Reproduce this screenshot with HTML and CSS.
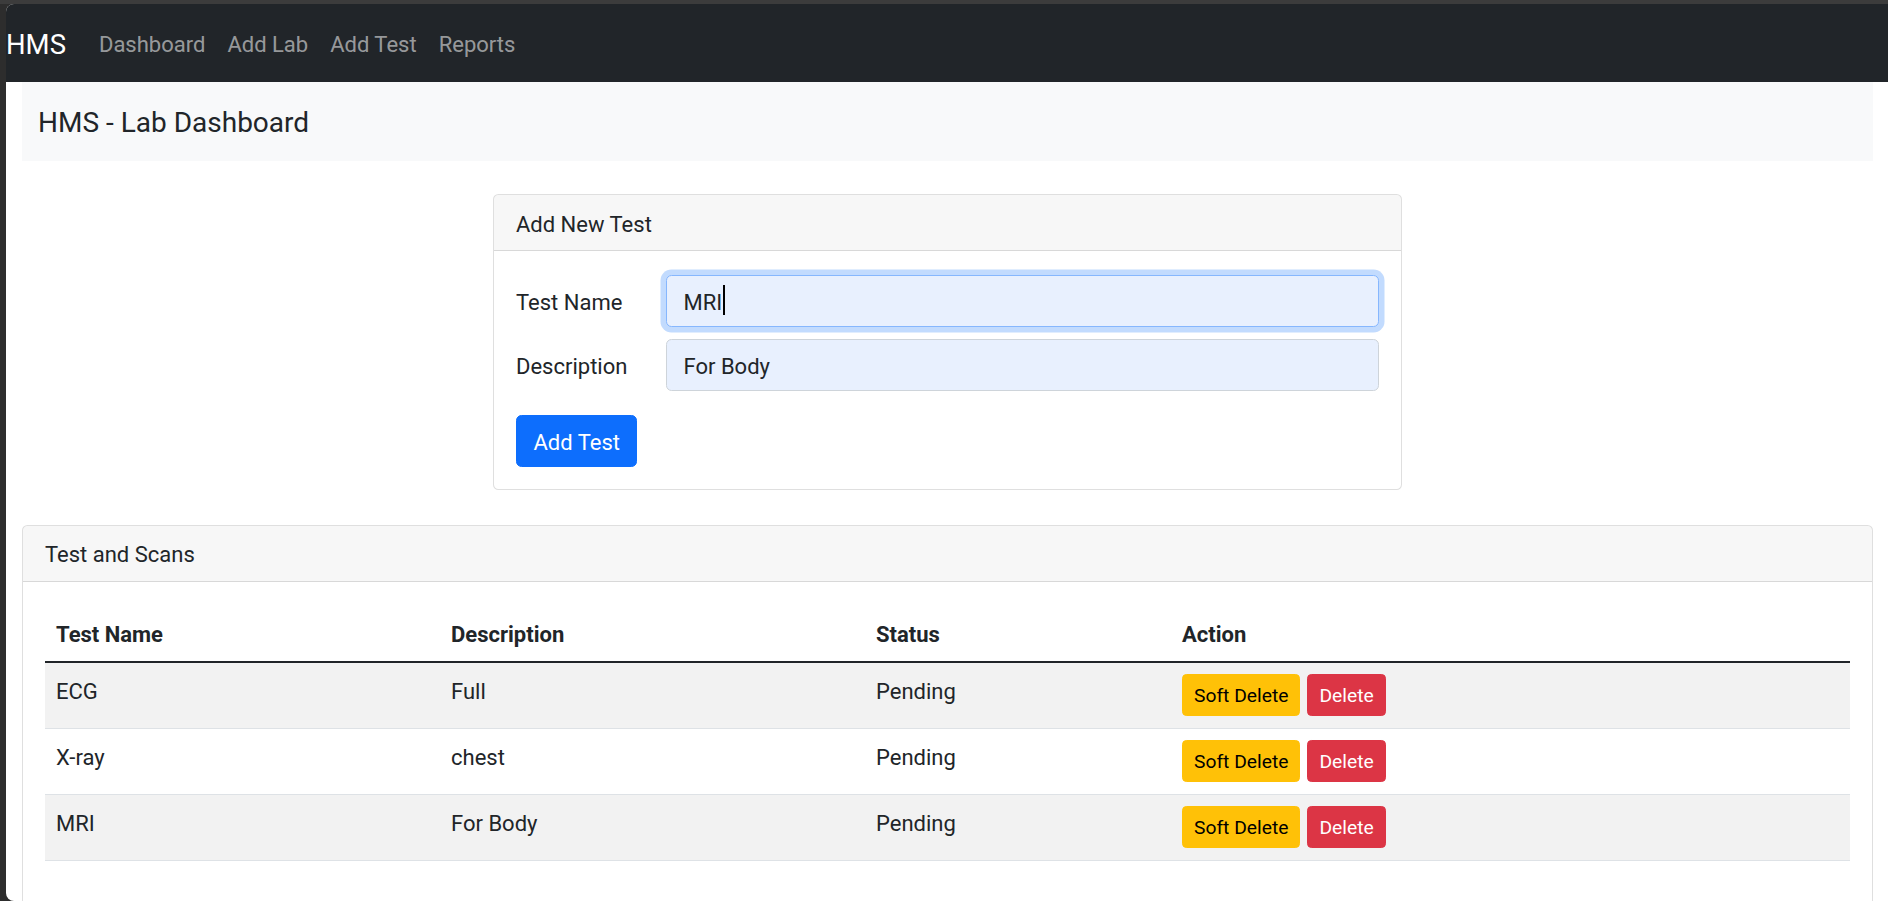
FILE: index.html
```html
<!DOCTYPE html>
<html lang="en">
<head>
<meta charset="utf-8">
<title>HMS - Lab Dashboard</title>
<link rel="stylesheet" href="styles.css">
</head>
<body>
<div class="window">
  <nav class="navbar">
    <a class="brand" href="#">HMS</a>
    <ul class="nav">
      <li><a class="nav-link" href="#">Dashboard</a></li>
      <li><a class="nav-link" href="#">Add Lab</a></li>
      <li><a class="nav-link" href="#">Add Test</a></li>
      <li><a class="nav-link" href="#">Reports</a></li>
    </ul>
  </nav>
  <main class="container">
    <div class="page-title"><h5>HMS - Lab Dashboard</h5></div>

    <section class="card card-form">
      <div class="card-header">Add New Test</div>
      <div class="card-body form-body">
        <form>
          <div class="form-row">
            <label for="tname">Test Name</label>
            <div class="input-wrap">
              <input id="tname" class="form-control autofilled focused" type="text" value="MRI">
              <span class="caret"></span>
            </div>
          </div>
          <div class="form-row">
            <label for="tdesc">Description</label>
            <div class="input-wrap">
              <input id="tdesc" class="form-control autofilled" type="text" value="For Body">
            </div>
          </div>
          <button type="button" class="btn btn-primary btn-submit">Add Test</button>
        </form>
      </div>
    </section>

    <section class="card card-table">
      <div class="card-header">Test and Scans</div>
      <div class="card-body table-body">
        <table class="table">
          <colgroup>
            <col class="c-name"><col class="c-desc"><col class="c-status"><col class="c-action">
          </colgroup>
          <thead>
            <tr><th>Test Name</th><th>Description</th><th>Status</th><th>Action</th></tr>
          </thead>
          <tbody>
            <tr class="striped">
              <td>ECG</td><td>Full</td><td>Pending</td>
              <td><div class="actions"><button class="btn btn-sm btn-warning">Soft Delete</button><button class="btn btn-sm btn-danger">Delete</button></div></td>
            </tr>
            <tr>
              <td>X-ray</td><td>chest</td><td>Pending</td>
              <td><div class="actions"><button class="btn btn-sm btn-warning">Soft Delete</button><button class="btn btn-sm btn-danger">Delete</button></div></td>
            </tr>
            <tr class="striped">
              <td>MRI</td><td>For Body</td><td>Pending</td>
              <td><div class="actions"><button class="btn btn-sm btn-warning">Soft Delete</button><button class="btn btn-sm btn-danger">Delete</button></div></td>
            </tr>
          </tbody>
        </table>
      </div>
    </section>
  </main>
</div>
</body>
</html>
```

FILE: styles.css
```css
* { box-sizing: border-box; }

html, body {
  margin: 0;
  height: 901px;
  overflow: hidden;
}

body {
  background: #2d2d2d;
  border-top: 4px solid #3c3c3c;
  font-family: "Roboto", "Lato", sans-serif;
  font-size: 22px;
  line-height: 1.5;
  color: #212529;
}

.window {
  margin-left: 6px;
  height: 897px;
  background: #fff;
  border-radius: 8px 0 0 8px;
  overflow: hidden;
}

/* navbar */
.navbar {
  height: 78px;
  padding-top: 3px;
  background: #212529;
  display: flex;
  align-items: center;
}

.brand {
  color: #fff;
  text-decoration: none;
  font-size: 27.5px;
  line-height: 41px;
  padding: 7px 0;
  margin-right: 22px;
}

.nav {
  display: flex;
  list-style: none;
  margin: 0;
  padding: 0;
}

.nav-link {
  display: block;
  padding: 0 11px;
  color: rgba(255, 255, 255, 0.55);
  text-decoration: none;
  line-height: 33px;
}

/* page */
.container {
  padding: 0 15px 0 16px;
}

.page-title {
  background: #f8f9fa;
  height: 79px;
  display: flex;
  align-items: center;
  padding: 3px 16px 0;
}

.page-title h5 {
  margin: 0;
  font-size: 28px;
  font-weight: 400;
  line-height: 1.2;
}

/* cards */
.card {
  background: #fff;
  border: 1px solid rgba(0, 0, 0, 0.125);
  border-radius: 5.5px;
}

.card-header {
  padding: 12.5px 22px 9.5px;
  line-height: 33px;
  background: rgba(0, 0, 0, 0.03);
  border-bottom: 1px solid rgba(0, 0, 0, 0.125);
  border-radius: 4.5px 4.5px 0 0;
}

.card-body {
  padding: 22px;
}

.card-form {
  width: 909px;
  margin: 33px auto 0;
}

.form-body {
  padding-top: 24px;
}

.form-row {
  display: grid;
  grid-template-columns: 150px 1fr;
  align-items: center;
  margin-bottom: 12.5px;
}

.form-row label {
  line-height: 33px;
  padding-top: 3px;
}

.input-wrap {
  position: relative;
}

.form-control {
  display: block;
  width: 100%;
  height: 51.5px;
  padding: 9.75px 16.5px 6.75px;
  font: inherit;
  line-height: 33px;
  color: #212529;
  background: #fff;
  border: 1px solid #ced4da;
  border-radius: 5.5px;
  outline: none;
}

.form-control.autofilled {
  background: #e8f0fe;
}

.form-control.focused {
  border-color: #86b7fe;
  box-shadow: 0 0 0 5.5px rgba(13, 110, 253, 0.25);
}

.caret {
  position: absolute;
  left: 57px;
  top: 10px;
  width: 1.5px;
  height: 30px;
  background: #000;
}

/* buttons */
.btn {
  display: inline-block;
  font: inherit;
  line-height: 33px;
  padding: 9.75px 16.5px 6.75px;
  border: 1px solid transparent;
  border-radius: 5.5px;
  cursor: pointer;
}

.btn-primary {
  background: #0d6efd;
  border-color: #0d6efd;
  color: #fff;
}

.btn-submit {
  margin-top: 12px;
}

.btn-sm {
  font-size: 19.25px;
  line-height: 28.9px;
  padding: 7px 11px 4px;
  border-radius: 4.4px;
}

.btn-warning {
  background: #ffc107;
  border-color: #ffc107;
  color: #000;
}

.btn-danger {
  background: #dc3545;
  border-color: #dc3545;
  color: #fff;
}

/* table card */
.card-table {
  margin-top: 35px;
}

.table-body {
  padding-top: 24px;
}

.table {
  width: 100%;
  border-collapse: collapse;
  margin-bottom: 22px;
}

.c-name { width: 395px; }
.c-desc { width: 425px; }
.c-status { width: 306px; }

.table th,
.table td {
  padding: 12.5px 11px 9.5px;
  text-align: left;
  vertical-align: top;
  line-height: 33px;
  border-bottom: 1px solid #dee2e6;
}

.table th {
  font-weight: 700;
  vertical-align: bottom;
}

.table tbody {
  border-top: 2px solid #212529;
}

.table tr.striped td {
  background: #f2f2f2;
}

.actions {
  display: flex;
  gap: 7px;
  height: 44.5px;
  margin-top: -1.5px;
}

.actions .btn {
  height: 42px;
}
```
